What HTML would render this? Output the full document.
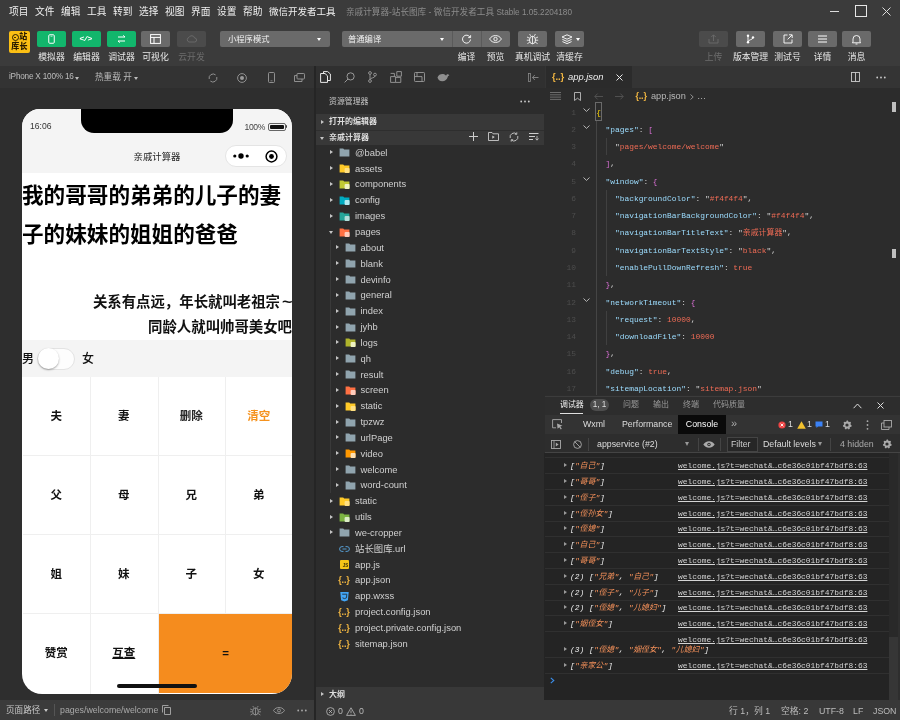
<!DOCTYPE html><html><head><meta charset="utf-8"><title>微信开发者工具</title><style>
*{box-sizing:border-box;margin:0;padding:0}
html,body{width:900px;height:720px;overflow:hidden;background:#2d2d2d}
body{will-change:transform}
body{position:relative;font-family:"Liberation Sans","Noto Sans CJK SC",sans-serif;font-size:9px;color:#ccc;-webkit-font-smoothing:antialiased}
.abs{position:absolute}
.t{position:absolute;white-space:nowrap;line-height:1}
#top{position:absolute;left:0;top:0;width:900px;height:65.5px;background:#3b3b3b}
.menu{position:absolute;top:5.7px;font-size:9.7px;color:#f0f0f0;white-space:nowrap;line-height:12px}
.btn{position:absolute;top:31px;height:16px;border-radius:2px;background:#6a6a6a}
.btn.g{background:#12b66c}
.btn.d{background:#4b4b4b}
.lbl{position:absolute;top:51.6px;font-size:8.8px;color:#e8e8e8;white-space:nowrap;line-height:11px;transform:translateX(-50%)}
.lbl.dim{color:#6e6e6e}
.dd{position:absolute;top:31px;height:16px;border-radius:2px;background:#6a6a6a;color:#f2f2f2;font-size:8.3px;line-height:17.6px;padding-left:8px;white-space:nowrap;overflow:hidden}
svg{position:absolute;overflow:visible}
/* simulator */
#simbar{position:absolute;left:0;top:65.5px;width:314px;height:23px;background:#333333}
#sim{position:absolute;left:0;top:88px;width:314px;height:612px;background:#2e2e2e}
#phone{position:absolute;left:22px;top:109px;width:270px;height:585px;background:#fff;border-radius:18px 18px 20px 20px;overflow:hidden;color:#000}
#notch{position:absolute;left:59px;top:0;width:152px;height:24px;background:#000;border-radius:0 0 13px 13px}
#nav{position:absolute;left:0;top:0;width:270px;height:64px;background:#f4f4f4}
.big{position:absolute;left:0;width:290px;font-size:21.6px;font-weight:700;line-height:39px;white-space:nowrap;color:#000;letter-spacing:0}
.mid{position:absolute;right:0;font-size:14.4px;font-weight:700;line-height:25px;white-space:nowrap;color:#111;text-align:right}
#sex{position:absolute;left:0;top:231px;width:270px;height:37px;background:#f4f4f4}
.cell{position:absolute;width:68.5px;height:79px;border-right:1px solid #efefef;border-bottom:1px solid #efefef;text-align:center;line-height:79px;font-size:11.5px;font-weight:700;color:#111}
/* explorer */
#div1{position:absolute;left:313.5px;top:66px;width:2.5px;height:654px;background:#252525}
#act{position:absolute;left:316px;top:65.5px;width:229px;height:22.5px;background:#303030}
#exp{position:absolute;left:316px;top:88px;width:229px;height:615px;background:#2c2c2c}
.sec{position:absolute;left:316px;width:228px;height:16px;background:#383838;color:#ddd;font-weight:700;font-size:8px;line-height:16px;white-space:nowrap}
.row{position:absolute;left:316px;width:228px;height:16px;line-height:16px;font-size:9.4px;color:#d0d0d0;white-space:nowrap}
.row .tx{position:absolute;top:0}
.arrow{position:absolute;width:0;height:0;border-style:solid}
.ar{border-width:2.5px 0 2.5px 3.5px;border-color:transparent transparent transparent #c5c5c5}
.ad{border-width:3.5px 2.5px 0 2.5px;border-color:#c5c5c5 transparent transparent transparent}
/* editor */
#tabs{position:absolute;left:545px;top:65.5px;width:355px;height:22.5px;background:#343434}
#tab{position:absolute;left:546px;top:65.5px;width:86px;height:22.5px;background:#2b2b2b}
#ed{position:absolute;left:545px;top:88px;width:355px;height:308px;background:#2c2c2c}
.ln{position:absolute;left:545px;width:31px;text-align:right;color:#4d4d4d;font-family:"Liberation Mono",monospace;font-size:7.9px;line-height:17px;height:17px}
.code{position:absolute;left:596px;font-family:"Liberation Mono","Noto Sans CJK SC",monospace;font-size:7.9px;line-height:17px;height:17px;white-space:pre;color:#d4d4d4}
.k{color:#9cdcfe}.s{color:#ee6b55}.n{color:#ee6b55}.b1{color:#ffd700}.b2{color:#da70d6}
/* debugger */
#dbg1{position:absolute;left:545px;top:396px;width:355px;height:18px;background:#2d2d2d;border-top:1px solid #3c3c3c}
#dbg2{position:absolute;left:545px;top:415px;width:355px;height:19px;background:#333333}
#dbg3{position:absolute;left:545px;top:434px;width:355px;height:19px;background:#2d2d2d;border-bottom:1px solid #444}
#con{position:absolute;left:544px;top:453px;width:345px;height:247px;background:#242424}
.cr{position:absolute;left:545px;width:344px;height:16px;border-bottom:1px solid #303030;font-family:"Liberation Mono","Noto Sans CJK SC",monospace;font-size:7.9px;line-height:15px;white-space:pre}
.cr .m{position:absolute;left:25px;top:0;font-style:italic;color:#ececec}
.cr .m i{color:#f5915a;font-style:italic}
.cr .l{position:absolute;left:133px;top:0;color:#d4d4d4;text-decoration:underline}
.cr .a{left:18.5px;top:5px}
/* bottom */
#bot1{position:absolute;left:0;top:699.5px;width:314px;height:20.5px;background:#3b3b3b}
#bot2{position:absolute;left:316px;top:700px;width:584px;height:20px;background:#383838}
</style></head><body>
<div id="top">
<span class="menu" style="left:9px">项目</span>
<span class="menu" style="left:35px">文件</span>
<span class="menu" style="left:61px">编辑</span>
<span class="menu" style="left:87px">工具</span>
<span class="menu" style="left:113px">转到</span>
<span class="menu" style="left:139px">选择</span>
<span class="menu" style="left:165px">视图</span>
<span class="menu" style="left:191px">界面</span>
<span class="menu" style="left:217px">设置</span>
<span class="menu" style="left:243px">帮助</span>
<span class="menu" style="left:269px"><span style="font-size:9.5px">微信开发者工具</span></span>
<span class="menu" style="left:346px;color:#8c8c8c;font-size:8.6px">亲戚计算器-站长图库 - 微信开发者工具 <span style="font-size:8.2px">Stable 1.05.2204180</span></span>
<div class="abs" style="left:830px;top:11px;width:9px;height:1px;background:#ddd"></div>
<div class="abs" style="left:855px;top:5px;width:12px;height:12px;border:1px solid #e6e6e6"></div>
<svg style="left:882px;top:7px" width="9" height="9" viewBox="0 0 9 9"><path d="M0.5 0.5L8.5 8.5M8.5 0.5L0.5 8.5" stroke="#ddd" stroke-width="1" fill="none"/></svg>
<div class="abs" style="left:9px;top:31px;width:21px;height:21.5px;background:#fbbf14;border-radius:2px"></div>
<div class="abs" style="left:11.5px;top:33.8px;width:7px;height:7px;border:1.6px solid #2a1c00;border-radius:50%"></div><div class="abs" style="left:14.2px;top:36.5px;width:1.6px;height:1.6px;background:#2a1c00;border-radius:50%"></div>
<span class="t" style="left:19.3px;top:33.2px;font-size:8px;font-weight:900;color:#2a1c00">站</span>
<span class="t" style="left:11.2px;top:42.8px;font-size:8px;font-weight:900;color:#2a1c00;letter-spacing:0.2px">库长</span>
<div class="btn g" style="left:37px;width:29px"></div>
<div class="btn g" style="left:72px;width:29px"></div>
<div class="btn g" style="left:107px;width:29px"></div>
<div class="btn" style="left:141px;width:29px"></div>
<div class="btn d" style="left:177px;width:29px"></div>
<svg style="left:48px;top:34px" width="7" height="10" viewBox="0 0 7 10"><rect x="0.75" y="0.75" width="5.5" height="8.5" rx="1" fill="none" stroke="#fff" stroke-width="1"/><path d="M2.5 2.2h2" stroke="#fff" stroke-width="0.7"/></svg>
<span class="t" style="left:79.5px;top:35px;font-size:8px;font-weight:700;color:#fff;font-family:'Liberation Mono',monospace;letter-spacing:-0.8px">&lt;/&gt;</span>
<svg style="left:116px;top:35px" width="11" height="8" viewBox="0 0 11 8"><path d="M2 2h7M7.2 0.4L9 2M9 6H2M3.8 7.6L2 6" stroke="#fff" stroke-width="1" fill="none"/></svg>
<svg style="left:150px;top:34px" width="11" height="10" viewBox="0 0 11 10"><rect x="0.6" y="0.6" width="9.8" height="8.8" fill="none" stroke="#fff" stroke-width="1"/><path d="M0.6 3.4h9.8M4 3.4v6" stroke="#fff" stroke-width="1"/></svg>
<svg style="left:186px;top:35px" width="11" height="8" viewBox="0 0 11 8"><path d="M3 7a2.4 2.4 0 0 1 0-4.6a3 3 0 0 1 5.6 0.6a2 2 0 0 1 0 4z" stroke="#6c6c6c" stroke-width="0.9" fill="none"/></svg>
<span class="lbl" style="left:51.5px">模拟器</span>
<span class="lbl" style="left:86.5px">编辑器</span>
<span class="lbl" style="left:121.5px">调试器</span>
<span class="lbl" style="left:155.5px">可视化</span>
<span class="lbl dim" style="left:191.5px">云开发</span>
<div class="dd" style="left:220px;width:110px">小程序模式<span class="arrow" style="right:9px;top:7px;border-width:3px 2.5px 0 2.5px;border-color:#fff transparent transparent transparent"></span></div>
<div class="dd" style="left:342px;width:110px;border-radius:2px 0 0 2px;padding-left:6px">普通编译<span class="arrow" style="right:8px;top:7px;border-width:3px 2.5px 0 2.5px;border-color:#fff transparent transparent transparent"></span></div>
<div class="btn" style="left:452px;width:29px;border-radius:0;border-left:1px solid #5a5a5a"></div>
<div class="btn" style="left:481px;width:29px;border-radius:0 2px 2px 0;border-left:1px solid #5a5a5a"></div>
<div class="btn" style="left:518px;width:29px"></div>
<div class="btn" style="left:555px;width:29px"></div>
<svg style="left:461px;top:33.5px" width="11" height="11" viewBox="0 0 11 11"><path d="M9 3.2A4 4 0 1 0 9.5 5.5" stroke="#fff" stroke-width="0.9" fill="none"/><path d="M9.6 1.2v2.4H7.2" stroke="#fff" stroke-width="0.9" fill="none"/></svg>
<svg style="left:489px;top:35px" width="13" height="8" viewBox="0 0 13 8"><path d="M0.6 4C2.2 1.4 4.2 0.6 6.5 0.6S10.8 1.4 12.4 4C10.8 6.6 8.8 7.4 6.5 7.4S2.2 6.6 0.6 4z" stroke="#fff" stroke-width="0.9" fill="none"/><circle cx="6.5" cy="4" r="1.7" stroke="#fff" stroke-width="0.9" fill="none"/></svg>
<svg style="left:526px;top:33px" width="13" height="12" viewBox="0 0 13 12"><ellipse cx="6.5" cy="7" rx="3" ry="3.8" stroke="#fff" stroke-width="0.9" fill="none"/><path d="M6.5 3.2v7.6M4.6 2.8L3.6 1M8.4 2.8L9.4 1M3.5 5.2L1 4M9.5 5.2L12 4M3.5 7.2H0.8M9.5 7.2h2.7M3.8 9.2L1.4 10.6M9.2 9.2l2.4 1.4" stroke="#fff" stroke-width="0.8" fill="none"/></svg>
<svg style="left:561px;top:34px" width="12" height="11" viewBox="0 0 12 11"><path d="M6 0.8L11 3L6 5.2L1 3z M1.4 5.4L6 7.4L10.6 5.4 M1.4 7.6L6 9.6L10.6 7.6" stroke="#fff" stroke-width="0.9" fill="none"/></svg>
<span class="arrow" style="left:576px;top:38px;border-width:3px 2.2px 0 2.2px;border-color:#fff transparent transparent transparent"></span>
<span class="lbl" style="left:466.5px">编译</span>
<span class="lbl" style="left:495.5px">预览</span>
<span class="lbl" style="left:532.5px">真机调试</span>
<span class="lbl" style="left:569.5px">清缓存</span>
<div class="btn d" style="left:699px;width:29px"></div>
<div class="btn" style="left:736px;width:29px"></div>
<div class="btn" style="left:773px;width:29px"></div>
<div class="btn" style="left:808px;width:29px"></div>
<div class="btn" style="left:842px;width:29px"></div>
<svg style="left:708px;top:34px" width="11" height="10" viewBox="0 0 11 10"><path d="M1 5v4h9V5M5.5 7V1M3.3 3L5.5 0.8L7.7 3" stroke="#6c6c6c" stroke-width="0.9" fill="none"/></svg>
<svg style="left:746px;top:34px" width="9" height="10" viewBox="0 0 9 10"><circle cx="2" cy="1.8" r="1.2" fill="#fff"/><circle cx="2" cy="8.2" r="1.2" fill="#fff"/><circle cx="7" cy="3.4" r="1.2" fill="#fff"/><path d="M2 2v6M7 3.6C7 6 2 5.4 2 8" stroke="#fff" stroke-width="0.9" fill="none"/></svg>
<svg style="left:783px;top:34px" width="10" height="10" viewBox="0 0 10 10"><path d="M4.5 1H1v8h8V5.5M6 0.8h3.2V4M9 1L4.6 5.4" stroke="#fff" stroke-width="0.9" fill="none"/></svg>
<svg style="left:818px;top:35px" width="9" height="8" viewBox="0 0 9 8"><path d="M0 1h9M0 4h9M0 7h9" stroke="#fff" stroke-width="1"/></svg>
<svg style="left:852px;top:33.5px" width="9" height="11" viewBox="0 0 9 11"><path d="M1 8V5a3.5 3.5 0 0 1 7 0v3l0.6 0.8H0.4z" stroke="#fff" stroke-width="0.9" fill="none"/><path d="M3.5 10h2" stroke="#fff" stroke-width="0.9"/></svg>
<span class="lbl dim" style="left:713.5px">上传</span>
<span class="lbl" style="left:750.5px">版本管理</span>
<span class="lbl" style="left:787.5px">测试号</span>
<span class="lbl" style="left:822.5px">详情</span>
<span class="lbl" style="left:856.5px">消息</span>
</div>
<div id="simbar"></div>
<span class="t" style="left:9px;top:73.4px;font-size:8.2px;letter-spacing:-0.2px;color:#bdbdbd">iPhone X 100% 16</span>
<span class="arrow" style="left:74.5px;top:76.9px;border-width:3px 2.2px 0 2.2px;border-color:#bdbdbd transparent transparent transparent"></span>
<span class="t" style="left:95px;top:72.9px;font-size:8.6px;color:#bdbdbd">热重载 开</span>
<span class="arrow" style="left:133.5px;top:76.9px;border-width:3px 2.2px 0 2.2px;border-color:#bdbdbd transparent transparent transparent"></span>
<svg style="left:208px;top:72.9px" width="10" height="10" viewBox="0 0 10 10"><path d="M1.2 6A4 4 0 0 1 7.6 1.9M8.8 4A4 4 0 0 1 2.4 8.1" stroke="#9a9a9a" stroke-width="0.9" fill="none"/></svg>
<svg style="left:237px;top:72.9px" width="10" height="10" viewBox="0 0 10 10"><circle cx="5" cy="5" r="4.4" stroke="#9a9a9a" stroke-width="0.9" fill="none"/><circle cx="5" cy="5" r="2" fill="#9a9a9a"/></svg>
<svg style="left:267.5px;top:72.4px" width="7" height="11" viewBox="0 0 7 11"><rect x="0.5" y="0.5" width="6" height="10" rx="1" stroke="#9a9a9a" stroke-width="0.9" fill="none"/><path d="M2.5 8.8h2" stroke="#9a9a9a" stroke-width="0.7"/></svg>
<svg style="left:294px;top:73.4px" width="11" height="9" viewBox="0 0 11 9"><rect x="3" y="0.5" width="7.5" height="5.5" rx="0.8" stroke="#9a9a9a" stroke-width="0.9" fill="none"/><path d="M3 2.6H0.5V8.5H8V6" stroke="#9a9a9a" stroke-width="0.9" fill="none"/></svg>
<div id="sim"></div>
<div id="phone">
<div id="nav"></div><div id="notch"></div>
<span class="t" style="left:8px;top:12.5px;font-size:8.6px;color:#333">16:06</span>
<span class="t" style="left:222.5px;top:13.5px;font-size:8.6px;letter-spacing:-0.4px;color:#444">100%</span>
<div class="abs" style="left:246px;top:14px;width:17.500px;height:7.500px;border:1px solid #666;border-radius:2px"></div><div class="abs" style="left:247.500px;top:15.500px;width:14.500px;height:4.500px;background:#111;border-radius:1px"></div><div class="abs" style="left:264px;top:16.200px;width:1.200px;height:3px;background:#444;border-radius:0 1px 1px 0"></div>
<span class="t" style="left:0;width:270px;text-align:center;top:43px;font-size:9.4px;color:#222">亲戚计算器</span>
<div class="abs" style="left:202.5px;top:35.5px;width:62.5px;height:22.5px;background:#fff;border:1px solid #e4e4e4;border-radius:11.5px"></div>
<svg style="left:210.5px;top:43.5px" width="16" height="6" viewBox="0 0 16 6"><circle cx="1.800" cy="3" r="1.600" fill="#000"/><circle cx="8" cy="3" r="2.700" fill="#000"/><circle cx="14.200" cy="3" r="1.600" fill="#000"/></svg>
<svg style="left:242.5px;top:40.5px" width="13" height="13" viewBox="0 0 13 13"><circle cx="6.500" cy="6.500" r="5.400" stroke="#000" stroke-width="1.500" fill="none"/><circle cx="6.500" cy="6.500" r="2.400" fill="#000"/></svg>
<div class="big" style="top:67px">我的哥哥的弟弟的儿子的妻</div>
<div class="big" style="top:106px">子的妹妹的姐姐的爸爸</div>
<div class="mid" style="top:181px">关系有点远，年长就叫老祖宗<span style="margin-left:1.5px;display:inline-block;transform:scaleX(1.25);transform-origin:left;width:10.5px;text-align:left">~</span></div>
<div class="mid" style="top:206px">同龄人就叫帅哥美女吧</div>
<div id="sex"></div>
<span class="t" style="left:0;top:243.8px;font-size:12px;font-weight:500;color:#111">男</span>
<span class="t" style="left:60px;top:243.8px;font-size:12px;font-weight:500;color:#111">女</span>
<div class="abs" style="left:15px;top:238.5px;width:38px;height:22px;border-radius:11px;background:#fdfdfd;border:1px solid #e3e3e3"></div>
<div class="abs" style="left:15.5px;top:239px;width:21px;height:21px;border-radius:11px;background:#fff;box-shadow:0 1px 2px rgba(0,0,0,0.35)"></div>
<div class="cell" style="left:0.5px;top:268px;height:79px">夫</div>
<div class="cell" style="left:68.0px;top:268px;height:79px">妻</div>
<div class="cell" style="left:135.5px;top:268px;height:79px;color:#262626">删除</div>
<div class="cell" style="left:203.0px;top:268px;height:79px;color:#f5921e">清空</div>
<div class="cell" style="left:0.5px;top:347px;height:79px">父</div>
<div class="cell" style="left:68.0px;top:347px;height:79px">母</div>
<div class="cell" style="left:135.5px;top:347px;height:79px">兄</div>
<div class="cell" style="left:203.0px;top:347px;height:79px">弟</div>
<div class="cell" style="left:0.5px;top:426px;height:79px">姐</div>
<div class="cell" style="left:68.0px;top:426px;height:79px">妹</div>
<div class="cell" style="left:135.5px;top:426px;height:79px">子</div>
<div class="cell" style="left:203.0px;top:426px;height:79px">女</div>
<div class="cell" style="left:0.5px;top:505px;height:82px">赞赏</div>
<div class="cell" style="left:68.0px;top:505px;height:82px;text-decoration:underline">互查</div>
<div class="cell" style="left:136.5px;top:505px;width:134px;height:78.5px;line-height:78px;background:#f58c1e;border:none">=</div>
<div class="abs" style="left:95px;top:575px;width:80px;height:4px;border-radius:2px;background:#111"></div>
</div>
<div id="bot1"></div>
<span class="t" style="left:6px;top:705.8px;font-size:8.6px;color:#c8c8c8">页面路径</span>
<span class="arrow" style="left:44px;top:709px;border-width:3px 2.2px 0 2.2px;border-color:#c8c8c8 transparent transparent transparent"></span>
<div class="abs" style="left:54px;top:704px;width:1px;height:12px;background:#555"></div>
<span class="t" style="left:60px;top:705.8px;font-size:8.8px;color:#aaa">pages/welcome/welcome</span>
<svg style="left:162px;top:705px" width="9" height="10" viewBox="0 0 9 10"><path d="M2.5 2.5h6v7h-6z M0.5 7.5v-7h6" stroke="#aaa" stroke-width="0.9" fill="none"/></svg>
<svg style="left:249px;top:704.5px" width="13" height="11" viewBox="0 0 13 11"><ellipse cx="6.5" cy="6.4" rx="2.8" ry="3.6" stroke="#999" stroke-width="0.9" fill="none"/><path d="M6.5 3v7M4.8 2.6L3.8 1M8.2 2.6L9.2 1M3.6 5L1.2 4M9.4 5l2.4-1M3.6 6.8H1M9.4 6.8H12M3.8 8.6L1.6 10M9.2 8.6l2.2 1.4" stroke="#999" stroke-width="0.8" fill="none"/></svg>
<svg style="left:273px;top:706.5px" width="12" height="7" viewBox="0 0 12 7"><path d="M0.5 3.5C2 1.2 3.9 0.5 6 0.5s4 0.7 5.5 3C10 5.8 8.100 6.500 6 6.500s-4-0.700-5.500-3z" stroke="#999" stroke-width="0.9" fill="none"/><circle cx="6" cy="3.5" r="1.5" stroke="#999" stroke-width="0.9" fill="none"/></svg>
<svg style="left:297px;top:709px" width="10" height="3" viewBox="0 0 10 3"><circle cx="1.2" cy="1.5" r="0.9" fill="#aaa"/><circle cx="5" cy="1.5" r="0.9" fill="#aaa"/><circle cx="8.8" cy="1.5" r="0.9" fill="#aaa"/></svg>
<div id="div1"></div><div id="act"></div><div id="exp"></div>
<svg style="left:319.5px;top:71px" width="11" height="12" viewBox="0 0 11 12"><path d="M3.5 2.5V0.6h4.2L10.4 3v6.500H7.5" stroke="#e8e8e8" stroke-width="1" fill="none"/><path d="M0.600 2.500h4.400l2.500 2.300v6.600H0.600z" stroke="#e8e8e8" stroke-width="1" fill="none"/></svg>
<svg style="left:343.5px;top:71.5px" width="11" height="11" viewBox="0 0 11 11"><circle cx="6.6" cy="4.4" r="3.6" stroke="#9a9a9a" stroke-width="1" fill="none"/><path d="M4 7L0.6 10.4" stroke="#9a9a9a" stroke-width="1"/></svg>
<svg style="left:368px;top:71px" width="9" height="12" viewBox="0 0 9 12"><circle cx="2" cy="2" r="1.4" stroke="#9a9a9a" stroke-width="0.9" fill="none"/><circle cx="2" cy="10" r="1.4" stroke="#9a9a9a" stroke-width="0.9" fill="none"/><circle cx="7" cy="3.6" r="1.4" stroke="#9a9a9a" stroke-width="0.9" fill="none"/><path d="M2 3.400v5.200M7 5c0 2.200-5 1.600-5 3.600" stroke="#9a9a9a" stroke-width="0.9" fill="none"/></svg>
<svg style="left:390px;top:71px" width="12" height="12" viewBox="0 0 12 12"><path d="M0.600 5.600h5v5.800h-5zM5.600 5.600h0M5.600 11.400h5.200V6.400H5.600M6.800 0.600h4.600v4.600H6.800z" stroke="#9a9a9a" stroke-width="0.9" fill="none"/><path d="M0.600 2.400h3.800v3.200" stroke="#9a9a9a" stroke-width="0.9" fill="none"/></svg>
<svg style="left:413.5px;top:72px" width="11" height="10" viewBox="0 0 11 10"><rect x="0.5" y="0.5" width="10" height="9" rx="0.800" stroke="#9a9a9a" stroke-width="0.9" fill="none"/><path d="M0.500 4.600h7.500M3 0.500v4.100M8 4.600v4.900" stroke="#9a9a9a" stroke-width="0.9" fill="none"/></svg>
<svg style="left:436.5px;top:72.5px" width="13" height="9" viewBox="0 0 13 9"><path d="M0.500 4.500c0.800-2.600 3.200-3.600 5.600-3.400c1.600 0.200 2.400 1 3 1.600c0.600-1.800 2.600-1.800 3.200-0.200c-1 0.200-1.400 0.800-1.600 1.600c-0.600 2.600-2.600 4.200-5.400 4.200c-2.600 0-4.200-1.400-4.800-3.800z" fill="#8f8f8f"/></svg>
<svg style="left:528px;top:72.5px" width="11" height="9" viewBox="0 0 11 9"><rect x="0.500" y="0.500" width="2" height="8" stroke="#8a8a8a" stroke-width="0.800" fill="none"/><path d="M10.500 4.500H4.500M6.800 2L4.500 4.500L6.800 7" stroke="#8a8a8a" stroke-width="0.9" fill="none"/></svg>
<span class="t" style="left:329px;top:97.5px;font-size:7.9px;color:#c8c8c8">资源管理器</span>
<svg style="left:520px;top:100px" width="10" height="3" viewBox="0 0 10 3"><circle cx="1.200" cy="1.500" r="0.9" fill="#ccc"/><circle cx="5" cy="1.500" r="0.9" fill="#ccc"/><circle cx="8.800" cy="1.500" r="0.9" fill="#ccc"/></svg>
<div class="sec" style="top:114px;height:15.5px"><span class="arrow ar" style="left:5px;top:5.500px"></span><span style="position:absolute;left:13px">打开的编辑器</span></div>
<div class="sec" style="top:129.5px;height:15.5px;border-top:1px solid #2e2e2e"><span class="arrow ad" style="left:4px;top:6px"></span><span style="position:absolute;left:13px;top:-1px">亲戚计算器</span></div>
<svg style="left:469px;top:132px" width="9" height="9" viewBox="0 0 9 9"><path d="M4.500 0v9M0 4.500h9" stroke="#ccc" stroke-width="1"/></svg>
<svg style="left:488px;top:132px" width="11" height="9" viewBox="0 0 11 9"><path d="M0.500 0.500h3.500l1 1.300h5.500v6.700h-10z" stroke="#ccc" stroke-width="0.9" fill="none"/><path d="M4.300 3.500l2.400 1.600l-2.400 1.600z" fill="#ccc"/></svg>
<svg style="left:509px;top:131.500px" width="10" height="10" viewBox="0 0 10 10"><path d="M1.200 6A4 4 0 0 1 7.600 1.900M8.800 4A4 4 0 0 1 2.400 8.100" stroke="#ccc" stroke-width="0.9" fill="none"/><path d="M7.800 0.300v2h-2M2.200 9.700v-2h2" stroke="#ccc" stroke-width="0.800" fill="none"/></svg>
<svg style="left:529px;top:132.500px" width="10" height="8" viewBox="0 0 10 8"><path d="M0 0.500h9.500M0 3.500h6M0 6.500h4" stroke="#ccc" stroke-width="1"/><path d="M8 3v4M6.500 5.500L8 7.200L9.500 5.500" stroke="#ccc" stroke-width="0.800" fill="none"/></svg>
<div class="row" style="top:144.8px"><span class="arrow ar" style="left:14px;top:5.5px"></span><span style="position:absolute;left:23.3px;top:0;width:11px;height:16px"><svg style="left:0;top:3.5px" width="11" height="9" viewBox="0 0 11 9"><path d="M0.600 0.400h3.600l1 1.200h5.200v7H0.600z" fill="#90a4ae"/></svg></span><span class="tx" style="left:39px">@babel</span></div>
<div class="row" style="top:160.64px"><span class="arrow ar" style="left:14px;top:5.5px"></span><span style="position:absolute;left:23.3px;top:0;width:11px;height:16px"><svg style="left:0;top:3.5px" width="11" height="9" viewBox="0 0 11 9"><path d="M0.600 0.400h3.600l1 1.200h5.200v7H0.600z" fill="#ffca28"/><rect x="5.600" y="4" width="5" height="5" rx="1" fill="#ffe082"/></svg></span><span class="tx" style="left:39px">assets</span></div>
<div class="row" style="top:176.48px"><span class="arrow ar" style="left:14px;top:5.5px"></span><span style="position:absolute;left:23.3px;top:0;width:11px;height:16px"><svg style="left:0;top:3.5px" width="11" height="9" viewBox="0 0 11 9"><path d="M0.600 0.400h3.600l1 1.200h5.200v7H0.600z" fill="#c0ca33"/><rect x="5.600" y="4" width="5" height="5" rx="1" fill="#f0f4c3"/></svg></span><span class="tx" style="left:39px">components</span></div>
<div class="row" style="top:192.32px"><span class="arrow ar" style="left:14px;top:5.5px"></span><span style="position:absolute;left:23.3px;top:0;width:11px;height:16px"><svg style="left:0;top:3.5px" width="11" height="9" viewBox="0 0 11 9"><path d="M0.600 0.400h3.600l1 1.200h5.200v7H0.600z" fill="#00acc1"/><rect x="5.600" y="4" width="5" height="5" rx="1" fill="#b2ebf2"/></svg></span><span class="tx" style="left:39px">config</span></div>
<div class="row" style="top:208.16px"><span class="arrow ar" style="left:14px;top:5.5px"></span><span style="position:absolute;left:23.3px;top:0;width:11px;height:16px"><svg style="left:0;top:3.5px" width="11" height="9" viewBox="0 0 11 9"><path d="M0.600 0.400h3.600l1 1.200h5.200v7H0.600z" fill="#26a69a"/><rect x="5.600" y="4" width="5" height="5" rx="1" fill="#b2dfdb"/></svg></span><span class="tx" style="left:39px">images</span></div>
<div class="row" style="top:224.0px"><span class="arrow ad" style="left:13px;top:6.5px"></span><span style="position:absolute;left:23.3px;top:0;width:11px;height:16px"><svg style="left:0;top:3.5px" width="11" height="9" viewBox="0 0 11 9"><path d="M0.600 0.400h3.600l1 1.200h5.200v7H0.600z" fill="#ff7043"/><rect x="5.600" y="4" width="5" height="5" rx="1" fill="#ffccbc"/></svg></span><span class="tx" style="left:39px">pages</span></div>
<div class="row" style="top:239.84px"><span class="arrow ar" style="left:20px;top:5.5px"></span><span style="position:absolute;left:29.3px;top:0;width:11px;height:16px"><svg style="left:0;top:3.5px" width="11" height="9" viewBox="0 0 11 9"><path d="M0.600 0.400h3.600l1 1.200h5.200v7H0.600z" fill="#90a4ae"/></svg></span><span class="tx" style="left:44.5px">about</span></div>
<div class="row" style="top:255.68px"><span class="arrow ar" style="left:20px;top:5.5px"></span><span style="position:absolute;left:29.3px;top:0;width:11px;height:16px"><svg style="left:0;top:3.5px" width="11" height="9" viewBox="0 0 11 9"><path d="M0.600 0.400h3.600l1 1.200h5.200v7H0.600z" fill="#90a4ae"/></svg></span><span class="tx" style="left:44.5px">blank</span></div>
<div class="row" style="top:271.52px"><span class="arrow ar" style="left:20px;top:5.5px"></span><span style="position:absolute;left:29.3px;top:0;width:11px;height:16px"><svg style="left:0;top:3.5px" width="11" height="9" viewBox="0 0 11 9"><path d="M0.600 0.400h3.600l1 1.200h5.200v7H0.600z" fill="#90a4ae"/></svg></span><span class="tx" style="left:44.5px">devinfo</span></div>
<div class="row" style="top:287.36px"><span class="arrow ar" style="left:20px;top:5.5px"></span><span style="position:absolute;left:29.3px;top:0;width:11px;height:16px"><svg style="left:0;top:3.5px" width="11" height="9" viewBox="0 0 11 9"><path d="M0.600 0.400h3.600l1 1.200h5.200v7H0.600z" fill="#90a4ae"/></svg></span><span class="tx" style="left:44.5px">general</span></div>
<div class="row" style="top:303.2px"><span class="arrow ar" style="left:20px;top:5.5px"></span><span style="position:absolute;left:29.3px;top:0;width:11px;height:16px"><svg style="left:0;top:3.5px" width="11" height="9" viewBox="0 0 11 9"><path d="M0.600 0.400h3.600l1 1.200h5.200v7H0.600z" fill="#90a4ae"/></svg></span><span class="tx" style="left:44.5px">index</span></div>
<div class="row" style="top:319.04px"><span class="arrow ar" style="left:20px;top:5.5px"></span><span style="position:absolute;left:29.3px;top:0;width:11px;height:16px"><svg style="left:0;top:3.5px" width="11" height="9" viewBox="0 0 11 9"><path d="M0.600 0.400h3.600l1 1.200h5.200v7H0.600z" fill="#90a4ae"/></svg></span><span class="tx" style="left:44.5px">jyhb</span></div>
<div class="row" style="top:334.88px"><span class="arrow ar" style="left:20px;top:5.5px"></span><span style="position:absolute;left:29.3px;top:0;width:11px;height:16px"><svg style="left:0;top:3.5px" width="11" height="9" viewBox="0 0 11 9"><path d="M0.600 0.400h3.600l1 1.200h5.200v7H0.600z" fill="#afb42b"/><rect x="5.600" y="4" width="5" height="5" rx="1" fill="#f0f4c3"/></svg></span><span class="tx" style="left:44.5px">logs</span></div>
<div class="row" style="top:350.72px"><span class="arrow ar" style="left:20px;top:5.5px"></span><span style="position:absolute;left:29.3px;top:0;width:11px;height:16px"><svg style="left:0;top:3.5px" width="11" height="9" viewBox="0 0 11 9"><path d="M0.600 0.400h3.600l1 1.200h5.200v7H0.600z" fill="#90a4ae"/></svg></span><span class="tx" style="left:44.5px">qh</span></div>
<div class="row" style="top:366.56px"><span class="arrow ar" style="left:20px;top:5.5px"></span><span style="position:absolute;left:29.3px;top:0;width:11px;height:16px"><svg style="left:0;top:3.5px" width="11" height="9" viewBox="0 0 11 9"><path d="M0.600 0.400h3.600l1 1.200h5.200v7H0.600z" fill="#90a4ae"/></svg></span><span class="tx" style="left:44.5px">result</span></div>
<div class="row" style="top:382.4px"><span class="arrow ar" style="left:20px;top:5.5px"></span><span style="position:absolute;left:29.3px;top:0;width:11px;height:16px"><svg style="left:0;top:3.5px" width="11" height="9" viewBox="0 0 11 9"><path d="M0.600 0.400h3.600l1 1.200h5.200v7H0.600z" fill="#ff7043"/><rect x="5.600" y="4" width="5" height="5" rx="1" fill="#ffccbc"/></svg></span><span class="tx" style="left:44.5px">screen</span></div>
<div class="row" style="top:398.24px"><span class="arrow ar" style="left:20px;top:5.5px"></span><span style="position:absolute;left:29.3px;top:0;width:11px;height:16px"><svg style="left:0;top:3.5px" width="11" height="9" viewBox="0 0 11 9"><path d="M0.600 0.400h3.600l1 1.200h5.200v7H0.600z" fill="#ffca28"/><rect x="5.600" y="4" width="5" height="5" rx="1" fill="#ffe082"/></svg></span><span class="tx" style="left:44.5px">static</span></div>
<div class="row" style="top:414.08px"><span class="arrow ar" style="left:20px;top:5.5px"></span><span style="position:absolute;left:29.3px;top:0;width:11px;height:16px"><svg style="left:0;top:3.5px" width="11" height="9" viewBox="0 0 11 9"><path d="M0.600 0.400h3.600l1 1.200h5.200v7H0.600z" fill="#90a4ae"/></svg></span><span class="tx" style="left:44.5px">tpzwz</span></div>
<div class="row" style="top:429.92px"><span class="arrow ar" style="left:20px;top:5.5px"></span><span style="position:absolute;left:29.3px;top:0;width:11px;height:16px"><svg style="left:0;top:3.5px" width="11" height="9" viewBox="0 0 11 9"><path d="M0.600 0.400h3.600l1 1.200h5.200v7H0.600z" fill="#90a4ae"/></svg></span><span class="tx" style="left:44.5px">urlPage</span></div>
<div class="row" style="top:445.76px"><span class="arrow ar" style="left:20px;top:5.5px"></span><span style="position:absolute;left:29.3px;top:0;width:11px;height:16px"><svg style="left:0;top:3.5px" width="11" height="9" viewBox="0 0 11 9"><path d="M0.600 0.400h3.600l1 1.200h5.200v7H0.600z" fill="#ff9800"/><rect x="5.600" y="4" width="5" height="5" rx="1" fill="#ffe0b2"/></svg></span><span class="tx" style="left:44.5px">video</span></div>
<div class="row" style="top:461.6px"><span class="arrow ar" style="left:20px;top:5.5px"></span><span style="position:absolute;left:29.3px;top:0;width:11px;height:16px"><svg style="left:0;top:3.5px" width="11" height="9" viewBox="0 0 11 9"><path d="M0.600 0.400h3.600l1 1.200h5.200v7H0.600z" fill="#90a4ae"/></svg></span><span class="tx" style="left:44.5px">welcome</span></div>
<div class="row" style="top:477.44px"><span class="arrow ar" style="left:20px;top:5.5px"></span><span style="position:absolute;left:29.3px;top:0;width:11px;height:16px"><svg style="left:0;top:3.5px" width="11" height="9" viewBox="0 0 11 9"><path d="M0.600 0.400h3.600l1 1.200h5.200v7H0.600z" fill="#90a4ae"/></svg></span><span class="tx" style="left:44.5px">word-count</span></div>
<div class="row" style="top:493.28px"><span class="arrow ar" style="left:14px;top:5.5px"></span><span style="position:absolute;left:23.3px;top:0;width:11px;height:16px"><svg style="left:0;top:3.5px" width="11" height="9" viewBox="0 0 11 9"><path d="M0.600 0.400h3.600l1 1.200h5.200v7H0.600z" fill="#ffca28"/><rect x="5.600" y="4" width="5" height="5" rx="1" fill="#ffe082"/></svg></span><span class="tx" style="left:39px">static</span></div>
<div class="row" style="top:509.12px"><span class="arrow ar" style="left:14px;top:5.5px"></span><span style="position:absolute;left:23.3px;top:0;width:11px;height:16px"><svg style="left:0;top:3.5px" width="11" height="9" viewBox="0 0 11 9"><path d="M0.600 0.400h3.600l1 1.200h5.200v7H0.600z" fill="#7cb342"/><rect x="5.600" y="4" width="5" height="5" rx="1" fill="#dcedc8"/></svg></span><span class="tx" style="left:39px">utils</span></div>
<div class="row" style="top:524.96px"><span class="arrow ar" style="left:14px;top:5.5px"></span><span style="position:absolute;left:23.3px;top:0;width:11px;height:16px"><svg style="left:0;top:3.5px" width="11" height="9" viewBox="0 0 11 9"><path d="M0.600 0.400h3.600l1 1.200h5.200v7H0.600z" fill="#90a4ae"/></svg></span><span class="tx" style="left:39px">we-cropper</span></div>
<div class="row" style="top:540.8px"><svg style="left:23.3px;top:5.500px" width="11" height="6" viewBox="0 0 11 6"><path d="M4.500 0.600H3a2.400 2.400 0 0 0 0 4.800h1.500M6.500 0.600H8a2.400 2.400 0 0 1 0 4.800H6.500M3.500 3h4" stroke="#5aa7e0" stroke-width="0.9" fill="none"/></svg><span class="tx" style="left:39px">站长图库.url</span></div>
<div class="row" style="top:556.64px"><span style="position:absolute;left:23.8px;top:3.5px;width:9px;height:9px;background:#f5c518;border-radius:1px"></span><span style="position:absolute;left:26.8px;top:5px;font-size:4.5px;line-height:8px;font-weight:700;color:#3a2f00">JS</span><span class="tx" style="left:39px">app.js</span></div>
<div class="row" style="top:572.48px"><span style="position:absolute;left:22.3px;top:0;font-size:9px;font-weight:700;color:#f5b942;letter-spacing:-0.2px">{..}</span><span class="tx" style="left:39px">app.json</span></div>
<div class="row" style="top:588.32px"><svg style="left:23.8px;top:3.500px" width="9" height="10" viewBox="0 0 9 10"><path d="M0.300 0h8.400l-0.800 8.200L4.500 9.600L1.100 8.200z" fill="#42a5f5"/><path d="M2.200 2.200h4.600l-0.300 3.600l-2 0.800l-2-0.800" stroke="#20303c" stroke-width="0.900" fill="none"/></svg><span class="tx" style="left:39px">app.wxss</span></div>
<div class="row" style="top:604.16px"><span style="position:absolute;left:22.3px;top:0;font-size:9px;font-weight:700;color:#f5b942;letter-spacing:-0.2px">{..}</span><span class="tx" style="left:39px">project.config.json</span></div>
<div class="row" style="top:620.0px"><span style="position:absolute;left:22.3px;top:0;font-size:9px;font-weight:700;color:#f5b942;letter-spacing:-0.2px">{..}</span><span class="tx" style="left:39px">project.private.config.json</span></div>
<div class="row" style="top:635.84px"><span style="position:absolute;left:22.3px;top:0;font-size:9px;font-weight:700;color:#f5b942;letter-spacing:-0.2px">{..}</span><span class="tx" style="left:39px">sitemap.json</span></div>
<div class="abs" style="left:329.5px;top:240px;width:1px;height:253px;background:#3a3a3a"></div>
<div id="bot2"></div>
<div class="sec" style="top:687px;height:14px;width:228.500px;background:#383838"><span class="arrow ar" style="left:5px;top:5px"></span><span style="position:absolute;left:13px;top:-0.5px">大纲</span></div>
<svg style="left:326px;top:706.5px" width="9" height="9" viewBox="0 0 9 9"><circle cx="4.500" cy="4.500" r="3.900" stroke="#bbb" stroke-width="0.800" fill="none"/><path d="M3 3l3 3M6 3l-3 3" stroke="#bbb" stroke-width="0.800"/></svg>
<span class="t" style="left:338px;top:706.5px;font-size:8.8px;color:#bbb">0</span>
<svg style="left:346px;top:706.5px" width="10" height="9" viewBox="0 0 10 9"><path d="M5 0.800L9.400 8.400H0.600z" stroke="#bbb" stroke-width="0.800" fill="none"/><path d="M5 3.400v2.600M5 6.800v0.800" stroke="#bbb" stroke-width="0.800"/></svg>
<span class="t" style="left:359px;top:706.5px;font-size:8.8px;color:#bbb">0</span>
<div id="tabs"></div><div id="tab"></div><div id="ed"></div>
<span class="t" style="left:552px;top:72px;font-size:9.5px;font-weight:700;color:#f5b942;letter-spacing:-0.2px">{..}</span>
<span class="t" style="left:568px;top:72px;font-size:9.4px;font-style:italic;color:#f0f0f0">app.json</span>
<svg style="left:616px;top:73.500px" width="7" height="7" viewBox="0 0 7 7"><path d="M0.500 0.500l6 6M6.500 0.500l-6 6" stroke="#e8e8e8" stroke-width="1"/></svg>
<svg style="left:851px;top:72px" width="9" height="10" viewBox="0 0 9 10"><rect x="0.500" y="0.500" width="8" height="9" stroke="#ccc" stroke-width="0.9" fill="none"/><path d="M4.500 0.500v9" stroke="#ccc" stroke-width="0.9"/></svg>
<svg style="left:876px;top:76px" width="10" height="3" viewBox="0 0 10 3"><circle cx="1.200" cy="1.500" r="0.9" fill="#ccc"/><circle cx="5" cy="1.500" r="0.9" fill="#ccc"/><circle cx="8.800" cy="1.500" r="0.9" fill="#ccc"/></svg>
<svg style="left:550px;top:92px" width="11" height="8" viewBox="0 0 11 8"><path d="M0 0.500h11M0 2.800h11M0 5.100h11M0 7.400h11" stroke="#7d7d7d" stroke-width="0.800"/></svg>
<svg style="left:574px;top:91.500px" width="7" height="9" viewBox="0 0 7 9"><path d="M0.500 0.500h6v8L3.500 6.200L0.500 8.500z" stroke="#bbb" stroke-width="0.9" fill="none"/></svg>
<svg style="left:594px;top:93px" width="9" height="7" viewBox="0 0 9 7"><path d="M9 3.500H0.800M3.600 0.600L0.800 3.500L3.600 6.400" stroke="#555" stroke-width="0.9" fill="none"/></svg>
<svg style="left:615px;top:93px" width="9" height="7" viewBox="0 0 9 7"><path d="M0 3.500h8.200M5.400 0.600L8.200 3.500L5.400 6.400" stroke="#555" stroke-width="0.9" fill="none"/></svg>
<span class="t" style="left:635.500px;top:92px;font-size:9px;font-weight:700;color:#f5b942;letter-spacing:-0.2px">{..}</span>
<span class="t" style="left:651px;top:92px;font-size:9.2px;color:#b8b8b8">app.json</span>
<svg style="left:690px;top:93.500px" width="4" height="6" viewBox="0 0 4 6"><path d="M0.500 0.500L3.200 3L0.500 5.500" stroke="#aaa" stroke-width="0.800" fill="none"/></svg>
<span class="t" style="left:697px;top:92px;font-size:9.2px;color:#b8b8b8">…</span>
<div class="ln" style="top:103.5px">1</div>
<svg style="left:582.500px;top:108.2px" width="7" height="4" viewBox="0 0 7 4"><path d="M0.500 0.500L3.500 3.400L6.500 0.500" stroke="#c5c5c5" stroke-width="0.9" fill="none"/></svg>
<div class="code" style="top:103.5px"><span class="b1" style="outline:1px solid #6a6a6a;padding:4.5px 0.3px 3.5px">{</span></div>
<div class="ln" style="top:120.78px">2</div>
<svg style="left:582.500px;top:125.48px" width="7" height="4" viewBox="0 0 7 4"><path d="M0.500 0.500L3.500 3.400L6.500 0.500" stroke="#c5c5c5" stroke-width="0.9" fill="none"/></svg>
<div class="code" style="top:120.78px">  <span class="k">"pages"</span>: <span class="b2">[</span></div>
<div class="ln" style="top:138.06px">3</div>
<div class="code" style="top:138.06px">    "<span class="s">pages/welcome/welcome</span>"</div>
<div class="ln" style="top:155.34px">4</div>
<div class="code" style="top:155.34px">  <span class="b2">]</span>,</div>
<div class="ln" style="top:172.62px">5</div>
<svg style="left:582.500px;top:177.32px" width="7" height="4" viewBox="0 0 7 4"><path d="M0.500 0.500L3.500 3.400L6.500 0.500" stroke="#c5c5c5" stroke-width="0.9" fill="none"/></svg>
<div class="code" style="top:172.62px">  <span class="k">"window"</span>: <span class="b2">{</span></div>
<div class="ln" style="top:189.9px">6</div>
<div class="code" style="top:189.9px">    <span class="k">"backgroundColor"</span>: "<span class="s">#f4f4f4</span>",</div>
<div class="ln" style="top:207.18px">7</div>
<div class="code" style="top:207.18px">    <span class="k">"navigationBarBackgroundColor"</span>: "<span class="s">#f4f4f4</span>",</div>
<div class="ln" style="top:224.46px">8</div>
<div class="code" style="top:224.46px">    <span class="k">"navigationBarTitleText"</span>: "<span class="s">亲戚计算器</span>",</div>
<div class="ln" style="top:241.74px">9</div>
<div class="code" style="top:241.74px">    <span class="k">"navigationBarTextStyle"</span>: "<span class="s">black</span>",</div>
<div class="ln" style="top:259.02px">10</div>
<div class="code" style="top:259.02px">    <span class="k">"enablePullDownRefresh"</span>: <span class="s">true</span></div>
<div class="ln" style="top:276.3px">11</div>
<div class="code" style="top:276.3px">  <span class="b2">}</span>,</div>
<div class="ln" style="top:293.58px">12</div>
<svg style="left:582.500px;top:298.28px" width="7" height="4" viewBox="0 0 7 4"><path d="M0.500 0.500L3.500 3.400L6.500 0.500" stroke="#c5c5c5" stroke-width="0.9" fill="none"/></svg>
<div class="code" style="top:293.58px">  <span class="k">"networkTimeout"</span>: <span class="b2">{</span></div>
<div class="ln" style="top:310.86px">13</div>
<div class="code" style="top:310.86px">    <span class="k">"request"</span>: <span class="s">10000</span>,</div>
<div class="ln" style="top:328.14px">14</div>
<div class="code" style="top:328.14px">    <span class="k">"downloadFile"</span>: <span class="s">10000</span></div>
<div class="ln" style="top:345.42px">15</div>
<div class="code" style="top:345.42px">  <span class="b2">}</span>,</div>
<div class="ln" style="top:362.7px">16</div>
<div class="code" style="top:362.7px">  <span class="k">"debug"</span>: <span class="s">true</span>,</div>
<div class="ln" style="top:379.98px">17</div>
<div class="code" style="top:379.98px">  <span class="k">"sitemapLocation"</span>: "<span class="s">sitemap.json</span>"</div>
<div class="abs" style="left:606px;top:138px;width:1px;height:17px;background:#404040"></div>
<div class="abs" style="left:606px;top:190px;width:1px;height:86px;background:#404040"></div>
<div class="abs" style="left:606px;top:311px;width:1px;height:34px;background:#404040"></div>
<div class="abs" style="left:596px;top:121px;width:1px;height:274px;background:#454545"></div>
<div class="abs" style="left:545px;top:395px;width:355px;height:2px;background:#2d2d2d"></div>
<div class="abs" style="left:892px;top:102px;width:4px;height:10px;background:#bfbfbf"></div>
<div class="abs" style="left:892px;top:249px;width:4px;height:9px;background:#bfbfbf"></div>
<div id="dbg1"></div><div id="dbg2"></div><div id="dbg3"></div><div id="con"></div>
<span class="t" style="left:560px;top:401px;font-size:7.9px;color:#f0f0f0">调试器</span>
<div class="abs" style="left:560px;top:412.5px;width:23px;height:1px;background:#e0e0e0"></div>
<div class="abs" style="left:590px;top:399px;width:19px;height:12px;border-radius:6px;background:#4d4d4d"></div>
<span class="t" style="left:590px;width:19px;text-align:center;top:401px;font-size:8.2px;color:#ddd">1, 1</span>
<span class="t" style="left:623px;top:401px;font-size:8px;color:#9a9a9a">问题</span>
<span class="t" style="left:653px;top:401px;font-size:8px;color:#9a9a9a">输出</span>
<span class="t" style="left:683px;top:401px;font-size:8px;color:#9a9a9a">终端</span>
<span class="t" style="left:713px;top:401px;font-size:8px;color:#9a9a9a">代码质量</span>
<svg style="left:853px;top:402.5px" width="9" height="6" viewBox="0 0 9 6"><path d="M0.600 5.200L4.500 1L8.400 5.200" stroke="#ddd" stroke-width="1" fill="none"/></svg>
<svg style="left:877px;top:402px" width="7" height="7" viewBox="0 0 7 7"><path d="M0.500 0.500l6 6M6.500 0.500l-6 6" stroke="#ddd" stroke-width="1"/></svg>
<svg style="left:552px;top:419.3px" width="11" height="11" viewBox="0 0 11 11"><path d="M9.500 4V0.600H0.600v8.200H4" stroke="#aaa" stroke-width="0.9" fill="none"/><path d="M5 4.500l5.500 2.200l-2.300 0.900l1.600 2.200l-1 0.700l-1.500-2.200l-1.700 1.500z" fill="#aaa"/></svg>
<span class="t" style="left:583px;top:420.3px;font-size:8.8px;color:#ddd">Wxml</span>
<span class="t" style="left:622px;top:420.3px;font-size:8.8px;color:#ddd">Performance</span>
<div class="abs" style="left:678px;top:415px;width:48px;height:19px;background:#0a0a0a"></div>
<span class="t" style="left:678px;width:48px;text-align:center;top:420.3px;font-size:8.8px;color:#fff">Console</span>
<span class="t" style="left:731px;top:418.3px;font-size:11px;color:#aaa">»</span>
<svg style="left:778px;top:420.8px" width="8" height="8" viewBox="0 0 8 8"><circle cx="4" cy="4" r="3.600" fill="#ee4444"/><path d="M2.600 2.600l2.800 2.800M5.400 2.600L2.600 5.400" stroke="#fff" stroke-width="0.900"/></svg>
<span class="t" style="left:788px;top:420.3px;font-size:8.8px;color:#ddd">1</span>
<svg style="left:796.500px;top:420.8px" width="9" height="8" viewBox="0 0 9 8"><path d="M4.500 0.200L8.800 7.800H0.200z" fill="#f2c12e"/></svg>
<span class="t" style="left:807px;top:420.3px;font-size:8.8px;color:#ddd">1</span>
<svg style="left:815px;top:421.3px" width="8" height="8" viewBox="0 0 8 8"><path d="M0.500 0.500h7v5H3L1.500 7V5.500h-1z" fill="#3b82f6"/></svg>
<span class="t" style="left:825px;top:420.3px;font-size:8.8px;color:#ddd">1</span>
<svg style="left:842px;top:419.8px" width="10" height="10" viewBox="0 0 10 10"><path d="M5 0.400l0.900 0.100l0.300 1.100l0.900 0.500l1.100-0.400l0.900 1.100l-0.600 1l0.200 1l1 0.600l-0.300 1.400l-1.200 0.100l-0.600 0.800l0.300 1.100l-1.300 0.600l-0.800-0.800h-1l-0.800 0.800l-1.300-0.600l0.300-1.100l-0.600-0.800l-1.200-0.100l-0.300-1.400l1-0.600l0.200-1l-0.600-1l0.900-1.100l1.100 0.400l0.900-0.500l0.300-1.100z" fill="#aaa"/><circle cx="5" cy="5" r="1.600" fill="#333"/></svg>
<svg style="left:866px;top:420.3px" width="3" height="10" viewBox="0 0 3 10"><circle cx="1.500" cy="1.200" r="0.9" fill="#aaa"/><circle cx="1.500" cy="5" r="0.9" fill="#aaa"/><circle cx="1.500" cy="8.800" r="0.9" fill="#aaa"/></svg>
<svg style="left:881px;top:419.8px" width="11" height="10" viewBox="0 0 11 10"><rect x="3" y="0.500" width="7.500" height="6.500" stroke="#aaa" stroke-width="0.9" fill="none"/><path d="M3 3H0.500v6.500H8V7" stroke="#aaa" stroke-width="0.9" fill="none"/></svg>
<svg style="left:551px;top:439.8px" width="10" height="9" viewBox="0 0 10 9"><rect x="0.500" y="0.500" width="9" height="8" stroke="#aaa" stroke-width="0.9" fill="none"/><path d="M3 0.500v8" stroke="#aaa" stroke-width="0.800"/><path d="M4.800 2.600l2.800 1.900l-2.800 1.900z" fill="#aaa"/></svg>
<svg style="left:572.500px;top:439.8px" width="9" height="9" viewBox="0 0 9 9"><circle cx="4.500" cy="4.500" r="3.900" stroke="#aaa" stroke-width="0.9" fill="none"/><path d="M1.800 1.800l5.400 5.400" stroke="#aaa" stroke-width="0.9"/></svg>
<div class="abs" style="left:588px;top:437.8px;width:1px;height:13px;background:#444"></div>
<span class="t" style="left:597px;top:439.8px;font-size:8.8px;color:#ddd">appservice (#2)</span>
<span class="arrow" style="left:685px;top:442.3px;border-width:4px 2.500px 0 2.500px;border-color:#999 transparent transparent transparent"></span>
<div class="abs" style="left:698px;top:437.8px;width:1px;height:13px;background:#444"></div>
<svg style="left:703px;top:440.8px" width="12" height="7" viewBox="0 0 12 7"><path d="M0.300 3.500C2 1 3.900 0.300 6 0.300s4 0.700 5.700 3.200C10 6 8.100 6.700 6 6.700S2 6 0.300 3.500z" fill="#aaa"/><circle cx="6" cy="3.500" r="1.700" fill="#2d2d2d"/><circle cx="6" cy="3.500" r="0.800" fill="#aaa"/></svg>
<div class="abs" style="left:720px;top:437.8px;width:1px;height:13px;background:#444"></div>
<div class="abs" style="left:727px;top:436.8px;width:31px;height:15px;border:1px solid #444;background:#262626"></div>
<span class="t" style="left:731px;top:439.8px;font-size:8.8px;color:#ccc">Filter</span>
<span class="t" style="left:763px;top:439.8px;font-size:8.8px;color:#ddd">Default levels</span>
<span class="arrow" style="left:818px;top:442.3px;border-width:4px 2.500px 0 2.500px;border-color:#999 transparent transparent transparent"></span>
<div class="abs" style="left:830px;top:437.8px;width:1px;height:13px;background:#444"></div>
<span class="t" style="left:840px;top:439.8px;font-size:8.8px;color:#aaa">4 hidden</span>
<svg style="left:882px;top:439.3px" width="10" height="10" viewBox="0 0 10 10"><path d="M5 0.400l0.900 0.100l0.300 1.100l0.900 0.500l1.100-0.400l0.900 1.100l-0.600 1l0.200 1l1 0.600l-0.300 1.400l-1.200 0.100l-0.600 0.800l0.300 1.100l-1.300 0.600l-0.800-0.800h-1l-0.800 0.800l-1.300-0.600l0.300-1.100l-0.600-0.800l-1.200-0.100l-0.300-1.400l1-0.600l0.200-1l-0.600-1l0.900-1.100l1.100 0.400l0.900-0.500l0.300-1.100z" fill="#aaa"/><circle cx="5" cy="5" r="1.600" fill="#2d2d2d"/></svg>
<div class="abs" style="left:545px;top:453px;width:344px;height:5px;border-bottom:1px solid #303030;overflow:hidden"><span class="t" style="left:31px;top:-4px;font-size:8px;color:#ccc;font-style:italic">"</span></div>
<div class="cr" style="top:458.1px"><span class="arrow ar a" style="border-left-color:#9a9a9a"></span><span class="m">[<i>"自己"</i>]</span><span class="l">welcome.js?t=wechat&amp;…c6e36c01bf47bdf8:63</span></div>
<div class="cr" style="top:473.9px"><span class="arrow ar a" style="border-left-color:#9a9a9a"></span><span class="m">[<i>"哥哥"</i>]</span><span class="l">welcome.js?t=wechat&amp;…c6e36c01bf47bdf8:63</span></div>
<div class="cr" style="top:489.7px"><span class="arrow ar a" style="border-left-color:#9a9a9a"></span><span class="m">[<i>"侄子"</i>]</span><span class="l">welcome.js?t=wechat&amp;…c6e36c01bf47bdf8:63</span></div>
<div class="cr" style="top:505.5px"><span class="arrow ar a" style="border-left-color:#9a9a9a"></span><span class="m">[<i>"侄孙女"</i>]</span><span class="l">welcome.js?t=wechat&amp;…c6e36c01bf47bdf8:63</span></div>
<div class="cr" style="top:521.3px"><span class="arrow ar a" style="border-left-color:#9a9a9a"></span><span class="m">[<i>"侄媳"</i>]</span><span class="l">welcome.js?t=wechat&amp;…c6e36c01bf47bdf8:63</span></div>
<div class="cr" style="top:537.1px"><span class="arrow ar a" style="border-left-color:#9a9a9a"></span><span class="m">[<i>"自己"</i>]</span><span class="l">welcome.js?t=wechat&amp;…c6e36c01bf47bdf8:63</span></div>
<div class="cr" style="top:552.9px"><span class="arrow ar a" style="border-left-color:#9a9a9a"></span><span class="m">[<i>"哥哥"</i>]</span><span class="l">welcome.js?t=wechat&amp;…c6e36c01bf47bdf8:63</span></div>
<div class="cr" style="top:568.7px"><span class="arrow ar a" style="border-left-color:#9a9a9a"></span><span class="m">(2) [<i>"兄弟"</i>, <i>"自己"</i>]</span><span class="l">welcome.js?t=wechat&amp;…c6e36c01bf47bdf8:63</span></div>
<div class="cr" style="top:584.5px"><span class="arrow ar a" style="border-left-color:#9a9a9a"></span><span class="m">(2) [<i>"侄子"</i>, <i>"儿子"</i>]</span><span class="l">welcome.js?t=wechat&amp;…c6e36c01bf47bdf8:63</span></div>
<div class="cr" style="top:600.3px"><span class="arrow ar a" style="border-left-color:#9a9a9a"></span><span class="m">(2) [<i>"侄媳"</i>, <i>"儿媳妇"</i>]</span><span class="l">welcome.js?t=wechat&amp;…c6e36c01bf47bdf8:63</span></div>
<div class="cr" style="top:616.1px"><span class="arrow ar a" style="border-left-color:#9a9a9a"></span><span class="m">[<i>"姻侄女"</i>]</span><span class="l">welcome.js?t=wechat&amp;…c6e36c01bf47bdf8:63</span></div>
<div class="cr" style="top:631.9px;height:26.200px"><span class="l">welcome.js?t=wechat&amp;…c6e36c01bf47bdf8:63</span><span class="arrow ar a" style="top:15px;border-left-color:#9a9a9a"></span><span class="m" style="top:10px">(3) [<i>"侄媳"</i>, <i>"姻侄女"</i>, <i>"儿媳妇"</i>]</span></div>
<div class="cr" style="top:658.1px"><span class="arrow ar a" style="border-left-color:#9a9a9a"></span><span class="m">[<i>"亲家公"</i>]</span><span class="l">welcome.js?t=wechat&amp;…c6e36c01bf47bdf8:63</span></div>
<svg style="left:549.500px;top:677px" width="5" height="7" viewBox="0 0 5 7"><path d="M0.800 0.800L3.800 3.500L0.800 6.200" stroke="#3b8eea" stroke-width="1.100" fill="none"/></svg>
<div class="abs" style="left:889px;top:453px;width:8.5px;height:247px;background:#292929"></div>
<div class="abs" style="left:889px;top:637px;width:8.5px;height:63px;background:#363636"></div>
<div class="abs" style="left:897.5px;top:453px;width:2.5px;height:247px;background:#2e2e2e"></div>
<span class="t" style="left:729px;top:706.5px;font-size:8.8px;color:#bdbdbd">行 1，列 1</span>
<span class="t" style="left:781px;top:706.5px;font-size:8.8px;color:#bdbdbd">空格: 2</span>
<span class="t" style="left:819px;top:706.5px;font-size:8.8px;color:#bdbdbd">UTF-8</span>
<span class="t" style="left:853px;top:706.5px;font-size:8.8px;color:#bdbdbd">LF</span>
<span class="t" style="left:873px;top:706.5px;font-size:8.8px;color:#bdbdbd">JSON</span>
</body></html>
